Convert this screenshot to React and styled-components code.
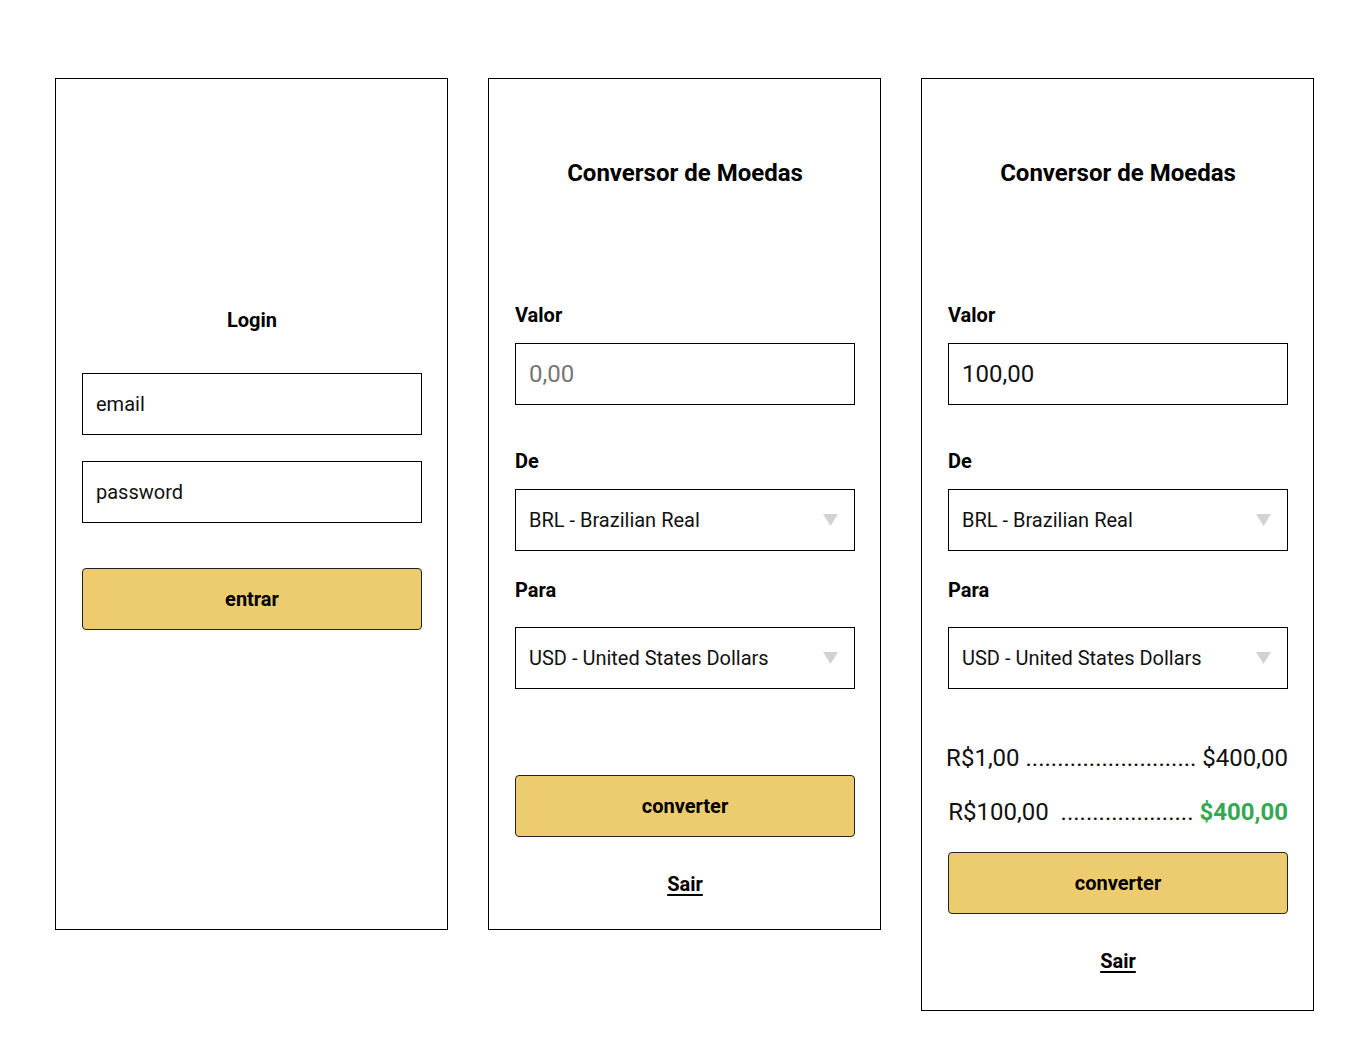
import React from 'react';
import styled, { createGlobalStyle } from 'styled-components';

const GlobalStyle = createGlobalStyle`
  body {
    margin: 0;
    background: #fff;
    font-family: Roboto, "Liberation Sans", Arial, sans-serif;
    color: #000;
  }
`;

const Page = styled.div`
  display: flex;
  align-items: flex-start;
  gap: 40px;
  padding: 78px 0 0 55px;
`;

const Panel = styled.section`
  box-sizing: border-box;
  width: 393px;
  height: ${(p) => (p.$height ? `${p.$height}px` : 'auto')};
  border: 1px solid #000;
  display: flex;
  flex-direction: column;
  padding: ${(p) => p.$top}px 26px ${(p) => p.$bottom || 0}px;
`;

const Title = styled.h1`
  margin: 0;
  font-size: ${(p) => p.$size || 24}px;
  line-height: ${(p) => (p.$size === 20 ? 24 : 28)}px;
  font-weight: 700;
  text-align: center;
  width: 340px;
`;

const FieldLabel = styled.label`
  display: block;
  margin-top: ${(p) => p.$mt}px;
  font-size: 20px;
  line-height: 24px;
  font-weight: 700;
`;

const TextField = styled.input`
  box-sizing: border-box;
  width: 340px;
  height: 62px;
  margin: ${(p) => p.$mt}px 0 0;
  padding: 0 13px;
  border: 1px solid #000;
  border-radius: 0;
  outline: none;
  font-family: Roboto, "Liberation Sans", Arial, sans-serif;
  font-size: ${(p) => p.$size}px;
  color: #111;

  &::placeholder {
    color: ${(p) => (p.$muted ? '#767676' : '#111')};
    opacity: 1;
  }
`;

const SelectBox = styled.div`
  box-sizing: border-box;
  width: 340px;
  height: 62px;
  margin-top: ${(p) => p.$mt}px;
  padding: 0 16px 0 13px;
  border: 1px solid #000;
  display: flex;
  align-items: center;
  justify-content: space-between;
  font-size: 20px;
  color: #111;
`;

const Button = styled.button`
  box-sizing: border-box;
  width: 340px;
  height: 62px;
  margin-top: ${(p) => p.$mt}px;
  background: #edcc6f;
  border: 1px solid #222;
  border-radius: 4px;
  font-family: Roboto, "Liberation Sans", Arial, sans-serif;
  font-size: 20px;
  font-weight: 700;
  color: #000;
  cursor: pointer;
`;

const ExitLink = styled.a`
  display: block;
  width: 340px;
  margin-top: ${(p) => p.$mt}px;
  text-align: center;
  font-size: 20px;
  line-height: 24px;
  font-weight: 700;
  color: #000;
  text-decoration: underline;
  text-underline-offset: 3px;
`;

const ResultRow = styled.div`
  width: 340px;
  display: flex;
  justify-content: flex-end;
  margin-top: ${(p) => p.$mt}px;
  font-size: 24px;
  line-height: 28px;
  white-space: pre;
  color: #111;
`;

const Highlight = styled.span`
  color: #34a853;
  font-weight: 700;
`;

const Arrow = () => (
  <svg width="15" height="12" viewBox="0 0 15 12">
    <path d="M0 0 H15 L7.5 12 Z" fill="#d2d2d2" />
  </svg>
);

const Select = ({ value, mt }) => (
  <SelectBox $mt={mt}>
    <span>{value}</span>
    <Arrow />
  </SelectBox>
);

const ConverterFields = ({ amount }) => (
  <>
    <Title>Conversor de Moedas</Title>
    <FieldLabel $mt={116}>Valor</FieldLabel>
    {amount ? (
      <TextField $mt={16} $size={24} defaultValue={amount} />
    ) : (
      <TextField $mt={16} $size={24} $muted placeholder="0,00" />
    )}
    <FieldLabel $mt={44}>De</FieldLabel>
    <Select mt={16} value="BRL - Brazilian Real" />
    <FieldLabel $mt={27}>Para</FieldLabel>
    <Select mt={25} value="USD - United States Dollars" />
  </>
);

export default function App() {
  return (
    <>
      <GlobalStyle />
      <Page>
        <Panel $height={852} $top={229}>
          <Title $size={20}>Login</Title>
          <TextField $mt={41} $size={20} placeholder="email" />
          <TextField $mt={26} $size={20} placeholder="password" type="password" />
          <Button $mt={45}>entrar</Button>
        </Panel>

        <Panel $height={852} $top={80}>
          <ConverterFields />
          <Button $mt={86}>converter</Button>
          <ExitLink $mt={35}>Sair</ExitLink>
        </Panel>

        <Panel $top={80} $bottom={37}>
          <ConverterFields amount="100,00" />
          <ResultRow $mt={55}>{'R$1,00 ........................... $400,00'}</ResultRow>
          <ResultRow $mt={26}>
            {'R$100,00  ..................... '}
            <Highlight>$400,00</Highlight>
          </ResultRow>
          <Button $mt={26}>converter</Button>
          <ExitLink $mt={35}>Sair</ExitLink>
        </Panel>
      </Page>
    </>
  );
}
